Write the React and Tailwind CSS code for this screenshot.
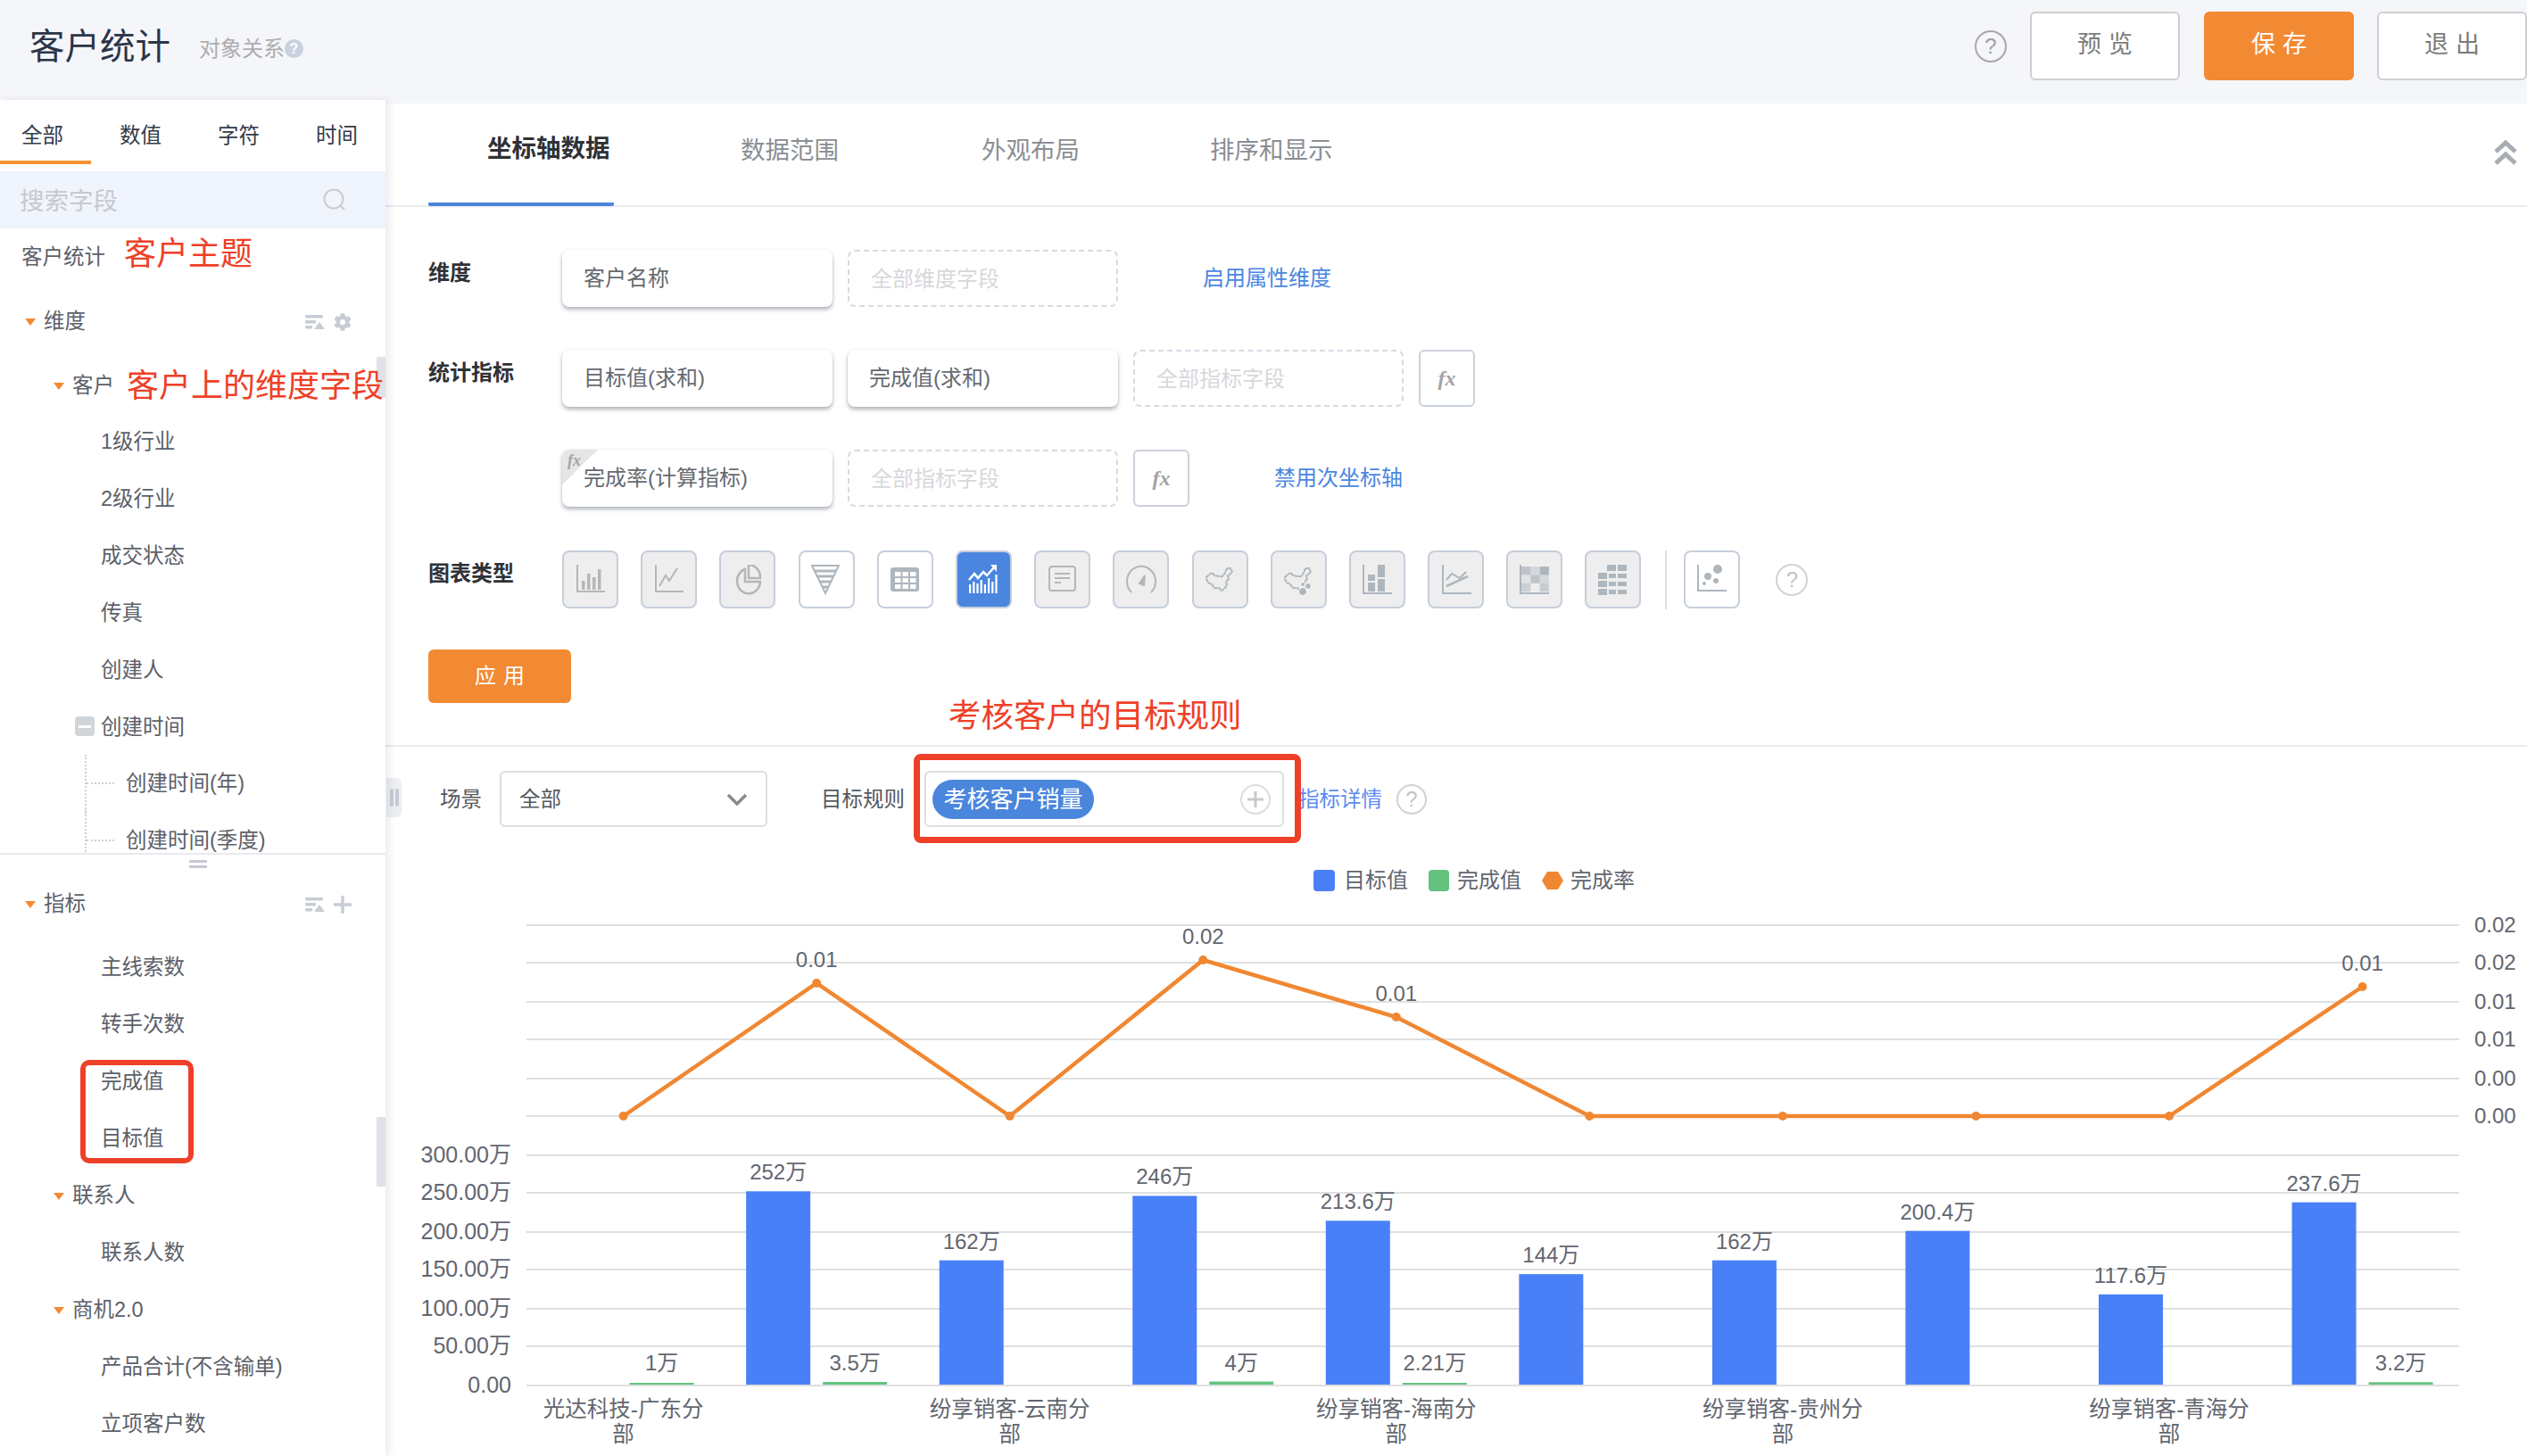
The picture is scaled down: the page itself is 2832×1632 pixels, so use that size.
import React from "react";
import { FaCog } from "react-icons/fa";

const Caret = () => (
  <span className="w-0 h-0 border-x-[6px] border-t-[8px] border-x-transparent border-t-[#f28a33]" />
);

const Help = ({ className = "" }) => (
  <span
    className={`flex items-center justify-center rounded-full border-2 text-[24px] ${className}`}
  >
    ?
  </span>
);

const SortIcon = () => (
  <svg width="22" height="16" viewBox="0 0 22 16" className="shrink-0">
    <rect x="0" y="0" width="20" height="3.5" rx="1" fill="#c8ccd4" />
    <rect x="0" y="6" width="12" height="3.5" rx="1" fill="#c8ccd4" />
    <rect x="0" y="12" width="8" height="3.5" rx="1" fill="#c8ccd4" />
    <path d="M10 16l6-8 6 8z" fill="#c8ccd4" />
  </svg>
);

const Fx = ({ className = "" }) => (
  <span
    className={`[font-family:'Liberation_Serif',serif] italic font-bold text-[#a3a3a3] ${className}`}
  >
    fx
  </span>
);

// one row in the field tree
const Leaf = ({ children }) => (
  <div className="h-[64px] pl-[113px] pt-[3px] flex items-center">{children}</div>
);

const Group = ({ label, indent }) => (
  <div className={`h-[64px] pt-[3px] flex items-center gap-[9px] ${indent}`}>
    <Caret />
    <span>{label}</span>
  </div>
);

const DateChild = ({ children }) => (
  <div className="h-[64px] ml-[95px] border-l-2 border-dotted border-[#cdd1d6] flex items-center">
    <span className="w-[31px] border-t-2 border-dotted border-[#cdd1d6] mr-[13px]" />
    <span className="pt-[2px] leading-none">{children}</span>
  </div>
);

const Sidebar = () => (
  <aside className="relative z-10 w-[432px] -mt-[4px] shrink-0 bg-white shadow-[4px_0_8px_rgba(80,90,110,0.12)] text-[23.5px] text-[#5c6069] h-[1520px] overflow-hidden">
    <div className="h-[80px] flex relative text-[#333a47]">
      <div className="w-[102px] h-[72px] pl-[24px] pt-[23px] border-b-4 border-[#f39233]">全部</div>
      <div className="ml-[32px] pt-[23px]">数值</div>
      <div className="ml-[63px] pt-[23px]">字符</div>
      <div className="ml-[63px] pt-[23px]">时间</div>
    </div>
    <div className="h-[64px] bg-[#f0f4fc] flex items-center justify-between pl-[22px] pr-[44px] text-[27.5px] text-[#c6c9cf]">
      <span className="pt-[3px]">搜索字段</span>
      <svg width="26" height="26" viewBox="0 0 26 26" fill="none" stroke="#c9ccd2" strokeWidth="2">
        <circle cx="12" cy="12" r="10.5" />
        <path d="M20 20l4 4" />
      </svg>
    </div>
    <div className="h-[700px] overflow-hidden">
      <div className="h-[62px] pl-[24px] pt-[3px] flex items-center gap-[21px]">
        <span>客户统计</span>
        <span className="text-[36px] text-[#ee4028] -mt-[8px]">客户主题</span>
      </div>
      <div className="mt-[9px] h-[64px] pl-[28px] pr-[38px] pt-[3px] flex items-center">
        <Caret />
        <span className="ml-[9px]">维度</span>
        <span className="ml-auto flex items-center gap-[10px]">
          <SortIcon />
          <FaCog className="text-[#c8ccd4] text-[20px]" />
        </span>
      </div>
      <div className="mt-[8px] h-[64px] pl-[60px] pt-[3px] flex items-center gap-[9px] whitespace-nowrap">
        <Caret />
        <span>客户</span>
        <span className="relative z-10 text-[36px] leading-none text-[#ee4028] ml-[5px]">客户上的维度字段</span>
      </div>
      <div className="-mt-[1px]">
        <Leaf>1级行业</Leaf>
        <Leaf>2级行业</Leaf>
        <Leaf>成交状态</Leaf>
        <Leaf>传真</Leaf>
        <Leaf>创建人</Leaf>
        <div className="h-[64px] pl-[84px] flex items-center gap-[7px]">
          <span className="w-[22px] h-[22px] rounded-[4px] bg-[#d0d5da] flex items-center justify-center">
            <span className="w-[14px] h-[3px] bg-white" />
          </span>
          <span className="pt-[3px]">创建时间</span>
        </div>
        <DateChild>创建时间(年)</DateChild>
        <DateChild>创建时间(季度)</DateChild>
      </div>
    </div>
    <div className="border-t-2 border-[#e8eaee] pt-[6px] pl-[12px] flex justify-center">
      <span className="w-[20px] h-[9px] border-y-[3px] border-[#c5c9d2] rounded-[1px]" />
    </div>
    <div className="mt-[7px] h-[64px] pl-[28px] pr-[38px] pt-[3px] flex items-center">
      <Caret />
      <span className="ml-[9px]">指标</span>
      <span className="ml-auto flex items-center gap-[10px]">
        <SortIcon />
        <svg width="20" height="20" viewBox="0 0 20 20">
          <path d="M10 1v18M1 10h18" stroke="#c8ccd4" strokeWidth="3.5" strokeLinecap="round" />
        </svg>
      </span>
    </div>
    <div className="mt-[7px]">
      <Leaf>主线索数</Leaf>
      <Leaf>转手次数</Leaf>
      <div className="relative">
        <Leaf>完成值</Leaf>
        <Leaf>目标值</Leaf>
        <div className="absolute left-[90px] top-[9px] w-[127px] h-[116px] border-[6px] border-[#ee4028] rounded-[10px]" />
      </div>
      <Group label="联系人" indent="pl-[60px]" />
      <Leaf>联系人数</Leaf>
      <Group label="商机2.0" indent="pl-[60px]" />
      <Leaf>产品合计(不含输单)</Leaf>
      <Leaf>立项客户数</Leaf>
    </div>
    <div className="absolute right-0 top-[288px] w-[10px] h-[46px] bg-[#dfe2e7]" />
    <div className="absolute right-0 top-[1140px] w-[10px] h-[78px] bg-[#dfe2e7]" />
  </aside>
);

const FieldCard = ({ children, calc }) => (
  <div className="relative w-[303px] h-[64px] rounded-[8px] bg-white shadow-[0_3px_4px_rgba(105,112,130,0.5),0_0_2px_rgba(105,112,130,0.15)] flex items-center pl-[24px] text-[24px] text-[#666a70]">
    {calc && (
      <span className="absolute left-0 top-0 w-[40px] h-[40px] rounded-tl-[8px] bg-[linear-gradient(135deg,#e6e6e6_50%,transparent_50%)] pl-[6px] text-[18px] leading-[24px]">
        <Fx />
      </span>
    )}
    {children}
  </div>
);

const DropSlot = ({ children }) => (
  <div className="w-[303px] h-[64px] rounded-[8px] border-2 border-dashed border-[#d5dae4] flex items-center pl-[24px] pt-[2px] text-[24px] text-[#d6d8db]">
    {children}
  </div>
);

const FxButton = () => (
  <div className="w-[63px] h-[64px] rounded-[6px] border-2 border-[#cbd1dc] flex items-center justify-center text-[24px]">
    <Fx />
  </div>
);

// chart type icons, 34x34 canvas
const G = "#b4b6b8";
const B = "#aeb6bd";
const MAP = "M2 14l3-3 4-2 2 3 5 1h4l3-4 2-5h4l2 4-3 3-2 1 1 4-3 3 1 4-3 4-3 2-3-3h-5l-3-4-4-2-2-4z";
const chartIcons = [
  <g key="bar" fill={G}>
    <path d="M2 0v30h31" fill="none" stroke={G} strokeWidth="2" />
    <rect x="7" y="18" width="3.5" height="10" />
    <rect x="13" y="10" width="3.5" height="18" />
    <rect x="19" y="14" width="3.5" height="14" />
    <rect x="25" y="5" width="3.5" height="23" />
  </g>,
  <g key="line" fill="none" stroke={G} strokeWidth="2">
    <path d="M2 0v30h31" />
    <path d="M6 24l7-12 4 6 9-14" />
  </g>,
  <g key="pie" fill="none" stroke={G} strokeWidth="2.5">
    <path d="M14 5a13 14 0 1 0 17 14H14z" />
    <path d="M18 0a13 14 0 0 1 13 15H18z" />
  </g>,
  <g key="funnel" fill="none" stroke={B} strokeWidth="2">
    <path d="M1 1h30L16 32z" />
    <path d="M4 7h24M7 13h18M10 19h12M13 25h6" strokeWidth="3" />
  </g>,
  <g key="table">
    <rect x="1" y="3" width="32" height="27" rx="3" fill={B} />
    {[0, 1, 2].map((r) =>
      [0, 1, 2].map((c) => (
        <rect key={`${r}${c}`} x={6 + c * 8.5} y={8 + r * 7} width="6.5" height="5" fill="#fff" />
      ))
    )}
  </g>,
  <g key="active" fill="#fff">
    {[0, 1, 2, 3, 4, 5, 6, 7].map((i) => (
      <rect key={i} x={1 + i * 4.2} y={[22, 19, 21, 17, 22, 15, 19, 11][i]} width="2.2" height={32 - [22, 19, 21, 17, 22, 15, 19, 11][i]} />
    ))}
    <path d="M1 17l6-7 4 5 6-7 4 4 8-9" fill="none" stroke="#fff" strokeWidth="2.5" />
    <path d="M25 0h7v8z" />
  </g>,
  <g key="text" fill="none" stroke={G} strokeWidth="2">
    <rect x="2" y="2" width="29" height="27" rx="3" />
    <path d="M8 10h17M8 15h17M8 20h7" />
  </g>,
  <g key="gauge" fill="none" stroke={G} strokeWidth="2">
    <path d="M6 31a16 17 0 1 1 22 0" />
    <path d="M15 21l6-9-1 11z" fill={G} />
  </g>,
  <path key="map" d={MAP} fill="none" stroke={B} strokeWidth="2" strokeDasharray="4 0.6" />,
  <g key="mapdots">
    <path d={MAP} fill="none" stroke={B} strokeWidth="2" strokeDasharray="4 0.6" />
    <circle cx="22" cy="30" r="4.5" fill={B} stroke="#fff" />
    <circle cx="28" cy="24" r="3.5" fill={B} stroke="#fff" />
    <circle cx="22" cy="22" r="2.5" fill={B} stroke="#fff" />
  </g>,
  <g key="stack" fill={B}>
    <path d="M2 0v32h32" fill="none" stroke={B} strokeWidth="2" />
    <rect x="7" y="11" width="8" height="7" />
    <rect x="7" y="20" width="8" height="10" />
    <rect x="18" y="0" width="8" height="14" />
    <rect x="18" y="16" width="8" height="14" />
  </g>,
  <g key="trend" fill="none" stroke={B} strokeWidth="2">
    <path d="M2 0v32h32" />
    <path d="M6 17l6-7 9 5 7-7" />
    <path d="M6 24l24-11" strokeWidth="2.5" />
  </g>,
  <g key="heat" fill={B}>
    <path d="M1 0v32h32" fill="none" stroke={B} strokeWidth="2" />
    {[0, 1, 2].map((r) =>
      [0, 1, 2].map((c) => (
        <rect
          key={`${r}${c}`}
          x={2 + c * 10.3}
          y={2 + r * 9.4}
          width="10.3"
          height="9.4"
          opacity={[[0.75, 0.4, 1], [0.2, 0.75, 0.4], [0.55, 0, 0.6]][r][c]}
        />
      ))
    )}
  </g>,
  <g key="blocks" fill={B}>
    <rect x="10" y="0" width="10" height="7" />
    <rect x="22" y="0" width="10" height="7" />
    <rect x="0" y="9" width="10" height="7" />
    <rect x="12" y="10" width="8" height="5" />
    <rect x="22" y="10" width="10" height="5" />
    <rect x="0" y="18" width="10" height="7" />
    <rect x="12" y="19" width="8" height="5" />
    <rect x="22" y="19" width="10" height="5" />
    <rect x="0" y="27" width="10" height="7" />
    <rect x="12" y="28" width="8" height="5" />
    <rect x="22" y="28" width="10" height="5" />
  </g>,
];

const scatterIcon = (
  <g fill={B}>
    <path d="M1 0v29h32" fill="none" stroke={B} strokeWidth="2" />
    <circle cx="12" cy="13" r="4" />
    <circle cx="23" cy="5" r="5" />
    <circle cx="21" cy="18" r="3" />
    <circle cx="8" cy="21" r="2" />
  </g>
);

const ChartType = ({ children, state = "off" }) => {
  const bg =
    state === "on"
      ? "bg-[#4a86e0]"
      : state === "white"
      ? "bg-white"
      : "bg-[#eeeeee]";
  return (
    <div
      className={`w-[63px] h-[65px] rounded-[8px] border-2 border-[#c6cedb] flex items-center justify-center shrink-0 ${bg}`}
    >
      <svg width="34" height="34" viewBox="0 0 34 34">
        {children}
      </svg>
    </div>
  );
};

const TabItem = ({ children, className }) => (
  <div className={`h-[115px] flex items-center pb-[10px] text-[27.5px] text-[#8a8e94] ${className}`}>
    {children}
  </div>
);

const blue = [0, 252, 162, 246, 213.6, 144, 162, 200.4, 117.6, 237.6];
const green = [1, 3.5, 0, 4, 2.21, 0, 0, 0, 0, 3.2];
const rate = [1251, 1102, 1251, 1076, 1140, 1251, 1251, 1251, 1251, 1106];
const rateLabels = { 1: "0.01", 3: "0.02", 4: "0.01", 9: "0.01" };
const names = {
  0: "光达科技-广东分",
  2: "纷享销客-云南分",
  4: "纷享销客-海南分",
  6: "纷享销客-贵州分",
  8: "纷享销客-青海分",
};
const cx = (i) => 698.6 + i * 216.55;
const upper = [1037, 1079, 1123, 1165, 1209, 1251];
const lower = [1295, 1337, 1381, 1423, 1467, 1509, 1553];
const leftTicks = ["300.00万", "250.00万", "200.00万", "150.00万", "100.00万", "50.00万", "0.00"];
const rightTicks = ["0.02", "0.02", "0.01", "0.01", "0.00", "0.00"];

const Chart = () => (
  <svg
    width="2400"
    height="632"
    viewBox="432 1000 2400 632"
    className="block mt-[2px]"
    fill="#62666f"
    fontSize="24"
  >
    {[...upper, ...lower].map((y) => (
      <line key={y} x1="590" x2="2756" y1={y} y2={y} stroke="#e0e0e0" strokeWidth="2" />
    ))}
    {leftTicks.map((t, i) => (
      <text key={i} x="573" y={lower[i] + 8} textAnchor="end" fontSize="25">{t}</text>
    ))}
    {rightTicks.map((t, i) => (
      <text key={i} x="2773" y={upper[i] + 8}>{t}</text>
    ))}
    {blue.map((v, i) =>
      v > 0 ? (
        <g key={i}>
          <rect x={cx(i) - 79} y={1552 - v * 0.86} width="72" height={v * 0.86} fill="#4a80f7" />
          <text x={cx(i) - 43} y={1552 - v * 0.86 - 13} textAnchor="middle">{v}万</text>
        </g>
      ) : null
    )}
    {green.map((v, i) =>
      v > 0 ? (
        <g key={i}>
          <rect x={cx(i) + 7} y={1552 - Math.max(v * 0.86, 2)} width="72" height={Math.max(v * 0.86, 2)} fill="#63c27e" />
          <text x={cx(i) + 43} y="1536" textAnchor="middle">{v}万</text>
        </g>
      ) : null
    )}
    <polyline
      points={rate.map((y, i) => `${cx(i)},${y}`).join(" ")}
      fill="none"
      stroke="#f08731"
      strokeWidth="4.5"
    />
    {rate.map((y, i) => (
      <circle key={i} cx={cx(i)} cy={y} r="5" fill="#f08731" />
    ))}
    {Object.entries(rateLabels).map(([i, t]) => (
      <text key={i} x={cx(+i)} y={rate[i] - 18} textAnchor="middle">{t}</text>
    ))}
    {Object.entries(names).map(([i, n]) => (
      <text key={i} textAnchor="middle" fontSize="24.5">
        <tspan x={cx(+i)} y="1588">{n}</tspan>
        <tspan x={cx(+i)} y="1616">部</tspan>
      </text>
    ))}
  </svg>
);

export default function App() {
  return (
    <div className="w-[2832px] h-[1632px] overflow-hidden bg-white [font-family:'Liberation_Sans','Noto_Sans_CJK_SC',sans-serif]">
      <header className="h-[116px] bg-[#f5f6fa] flex items-start">
        <h1 className="ml-[33px] mt-[27px] text-[39.5px] leading-[50px] text-[#2c3548]">客户统计</h1>
        <span className="ml-[32px] mt-[40px] text-[24px] leading-[30px] text-[#adadad]">对象关系</span>
        <span className="mt-[44px] w-[21px] h-[21px] rounded-full bg-[#c9d1de] text-white text-[16px] font-bold flex items-center justify-center">
          ?
        </span>
        <div className="ml-auto mt-[13px] flex items-center">
          <Help className="w-[36px] h-[36px] border-[#a8a8a8] text-[#a0a0a0] mr-[26px]" />
          <button className="w-[168px] h-[77px] rounded-[6px] border-2 border-[#cfcfcf] bg-white text-[27px] tracking-[8px] pl-[8px] pb-[2px] text-[#7c7c7c]">
            预览
          </button>
          <button className="ml-[27px] w-[168px] h-[77px] rounded-[6px] bg-[#f28a33] text-[27px] tracking-[8px] pl-[8px] pb-[2px] text-white">
            保存
          </button>
          <button className="ml-[26px] w-[168px] h-[77px] rounded-[6px] border-2 border-[#cfcfcf] bg-white text-[27px] tracking-[8px] pl-[8px] pb-[2px] text-[#7c7c7c]">
            退出
          </button>
        </div>
      </header>

      <div className="flex">
        <Sidebar />
        <main className="relative w-[2400px]">
          <div className="flex border-b-2 border-[#ebebed] h-[116px] pl-[48px] pr-[11px]">
            <div className="w-[208px] h-[115px] pl-[66px] pb-[10px] flex items-center border-b-4 border-[#4a86dc] text-[27.5px] font-bold text-[#2f3136] whitespace-nowrap rounded-b-[2px]">
              坐标轴数据
            </div>
            <TabItem className="ml-[142px]">数据范围</TabItem>
            <TabItem className="ml-[160px]">外观布局</TabItem>
            <TabItem className="ml-[146px]">排序和显示</TabItem>
            <svg width="26" height="28" viewBox="0 0 26 28" className="ml-auto mt-[41px]" fill="none" stroke="#a7adb5" strokeWidth="5">
              <path d="M2 13L13 3l11 10M2 26l11-10 11 10" />
            </svg>
          </div>

          <section className="pl-[48px] pt-[48px] h-[605px] border-b-2 border-[#ebebed] text-[24px]">
            <div className="flex h-[64px]">
              <div className="w-[150px] pt-[8px] font-bold text-[#2f3136]">维度</div>
              <FieldCard>客户名称</FieldCard>
              <div className="ml-[17px]"><DropSlot>全部维度字段</DropSlot></div>
              <a className="ml-[95px] self-center text-[#4a86e0]">启用属性维度</a>
            </div>
            <div className="flex h-[64px] mt-[48px] gap-[17px]">
              <div className="w-[133px] pt-[8px] font-bold text-[#2f3136]">统计指标</div>
              <FieldCard>目标值(求和)</FieldCard>
              <FieldCard>完成值(求和)</FieldCard>
              <DropSlot>全部指标字段</DropSlot>
              <FxButton />
            </div>
            <div className="flex h-[64px] mt-[48px] pl-[150px] gap-[17px]">
              <FieldCard calc>完成率(计算指标)</FieldCard>
              <DropSlot>全部指标字段</DropSlot>
              <FxButton />
              <a className="ml-[78px] self-center text-[#4a86e0]">禁用次坐标轴</a>
            </div>
            <div className="flex h-[65px] mt-[49px] items-center">
              <div className="w-[150px] -mt-[14px] font-bold text-[#2f3136]">图表类型</div>
              <div className="flex gap-[25.2px]">
                {chartIcons.map((icon, i) => (
                  <ChartType key={i} state={i === 5 ? "on" : i === 3 || i === 4 ? "white" : "off"}>
                    {icon}
                  </ChartType>
                ))}
              </div>
              <div className="ml-[27px] w-[2px] h-[66px] bg-[#dedede]" />
              <div className="ml-[19px]"><ChartType state="white">{scatterIcon}</ChartType></div>
              <Help className="ml-[40px] w-[36px] h-[36px] border-[#d2d2d2] text-[#c4c4c4]" />
            </div>
            <button className="mt-[46px] block w-[160px] h-[60px] rounded-[6px] bg-[#f28a33] text-white text-[24px] tracking-[8px] pl-[8px]">
              应用
            </button>
          </section>

          <span className="absolute left-[631px] top-[665px] text-[36.5px] leading-[44px] text-[#ee4028] whitespace-nowrap">
            考核客户的目标规则
          </span>

          <section className="relative text-[#55585f]">
            <div className="absolute left-[1px] top-[35px] w-[17px] h-[44px] rounded-r-[6px] bg-[#eceef2] flex items-center justify-center gap-[2px]">
              <span className="w-[4px] h-[20px] rounded-[2px] bg-[#c5c9d2]" />
              <span className="w-[4px] h-[20px] rounded-[2px] bg-[#c5c9d2]" />
            </div>
            <div className="pt-[26px] pl-[61px] flex items-center text-[23.5px] h-[91px]">
              <span className="pt-[2px]">场景</span>
              <div className="ml-[20px] w-[300px] h-[63px] rounded-[6px] border-2 border-[#dddddd] flex items-center justify-between pl-[20px] pr-[20px]">
                <span className="pt-[2px]">全部</span>
                <svg width="24" height="14" viewBox="0 0 24 14" fill="none" stroke="#8a8a8a" strokeWidth="3.5">
                  <path d="M2 2l10 10L22 2" />
                </svg>
              </div>
              <span className="ml-[60px] pt-[2px]">目标规则</span>
              <div className="ml-[22px] w-[403px] h-[63px] rounded-[6px] border-2 border-[#dddddd] flex items-center justify-between pl-[7px] pr-[13px]">
                <span className="h-[44px] w-[181px] pt-[2px] rounded-full bg-[#4a86dc] text-white text-[26px] flex items-center justify-center">
                  考核客户销量
                </span>
                <span className="w-[34px] h-[34px] rounded-full border-2 border-[#dddddd] flex items-center justify-center">
                  <svg width="20" height="20" viewBox="0 0 20 20">
                    <path d="M10 1v18M1 10h18" stroke="#c9c9c9" strokeWidth="3" />
                  </svg>
                </span>
              </div>
              <a className="ml-[16px] pt-[2px] text-[#5b8bf0]">指标详情</a>
              <Help className="ml-[16px] w-[34px] h-[34px] border-[#d2d2d2] text-[#c4c4c4]" />
            </div>
            <div className="absolute left-[592px] top-[8px] w-[434px] h-[100px] border-[7px] border-[#ee4028] rounded-[8px]" />
            <div className="mt-[44px] pl-[1040px] pt-[4px] flex items-center h-[26px] text-[24px] text-[#62666f]">
              <span className="w-[24px] h-[24px] rounded-[4px] bg-[#4a80f7] mr-[10px]" />
              目标值
              <span className="w-[23px] h-[24px] rounded-[4px] bg-[#63c27e] ml-[23px] mr-[9px]" />
              完成值
              <svg width="24" height="22" viewBox="0 0 24 22" className="ml-[23px] mr-[8px]">
                <path d="M6 1h12l6 10-6 10H6L0 11z" fill="#f08731" />
              </svg>
              完成率
            </div>
            <Chart />
          </section>
        </main>
      </div>
    </div>
  );
}
